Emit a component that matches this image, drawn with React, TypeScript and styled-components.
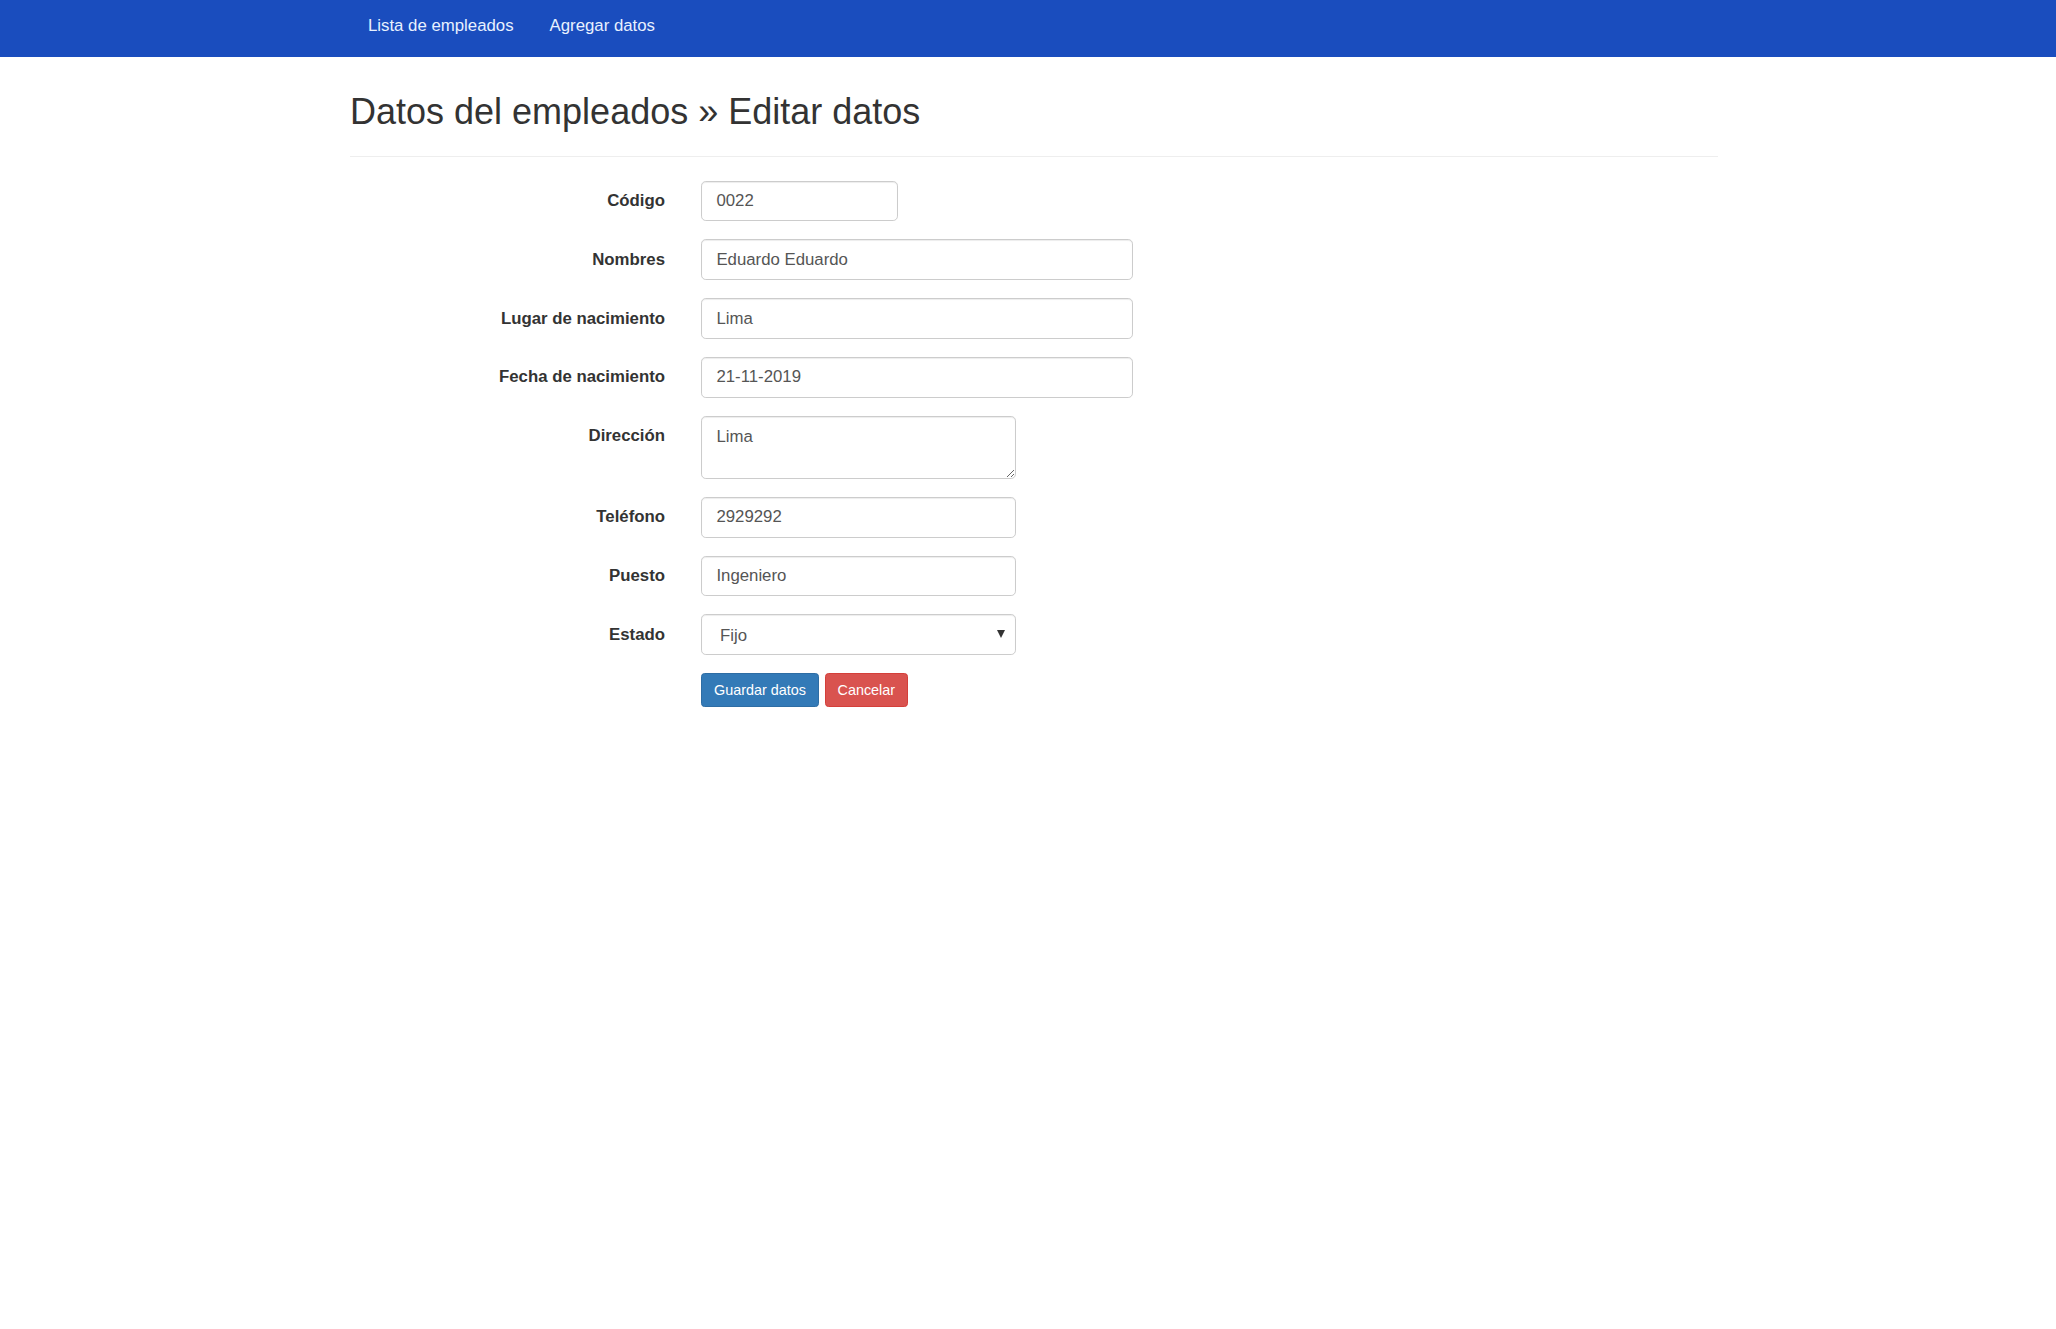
import React from "react";
import styled, { createGlobalStyle } from "styled-components";

const GlobalStyle = createGlobalStyle`
  html, body { margin: 0; padding: 0; background: #fff; }
  body {
    font-family: "Liberation Sans", Arial, Helvetica, sans-serif;
    font-size: 16.8px;
    line-height: 1.42857;
    color: #333;
  }
  * { box-sizing: border-box; }
`;

const Navbar = styled.nav`
  height: 57px;
  background: #1a4dbe;
`;

const Container = styled.div`
  width: 1368px;
  margin-left: calc(50% - 678px);
`;

const NavList = styled.ul`
  display: flex;
  list-style: none;
  margin: 0;
  padding: 0;
`;

const NavLink = styled.a`
  display: block;
  padding: 14px 18px 19px;
  font-size: 16.8px;
  line-height: 24px;
  color: #e8f1ff;
  text-decoration: none;
`;

const Title = styled.h2`
  margin: 35px 0 0;
  font-size: 36px;
  font-weight: 500;
  line-height: 1.1;
  color: #333;
`;

const Divider = styled.hr`
  margin: 24px 0 24px;
  border: 0;
  border-top: 1px solid #eee;
`;

const Form = styled.form`
  display: grid;
  grid-template-columns: 315px 1fr;
  column-gap: 36px;
  row-gap: 18px;
  align-items: start;
`;

const Label = styled.label`
  padding-top: 8.4px;
  text-align: right;
  font-weight: 700;
  font-size: 16.8px;
  line-height: 24px;
  color: #333;
`;

const controlBase = `
  display: block;
  padding: 8.4px 14.4px;
  font-family: "Liberation Sans", Arial, Helvetica, sans-serif;
  font-size: 16.8px;
  line-height: 24px;
  color: #555;
  background: #fff;
  border: 1px solid #ccc;
  border-radius: 4.8px;
  box-shadow: inset 0 1px 1px rgba(0, 0, 0, 0.075);
  outline: none;
`;

const Input = styled.input<{ $w: number }>`
  ${controlBase}
  width: ${(p) => p.$w}px;
  height: 40.8px;
`;

const TextArea = styled.textarea<{ $w: number }>`
  ${controlBase}
  width: ${(p) => p.$w}px;
  height: 63px;
  resize: both;
  margin: 0;
`;

const SelectWrap = styled.div<{ $w: number }>`
  position: relative;
  width: ${(p) => p.$w}px;
  &::after {
    content: "";
    position: absolute;
    right: 11px;
    top: 16px;
    border-left: 4px solid transparent;
    border-right: 4px solid transparent;
    border-top: 8px solid #333;
    pointer-events: none;
  }
`;

const Select = styled.select`
  ${controlBase}
  appearance: none;
  -webkit-appearance: none;
  width: 100%;
  height: 40.8px;
  padding-left: 18px;
`;

const Actions = styled.div`
  grid-column: 2;
  display: flex;
  gap: 5.5px;
`;

const Button = styled.button<{ $variant: "primary" | "danger" }>`
  height: 34px;
  padding: 0 12px;
  font-family: "Liberation Sans", Arial, Helvetica, sans-serif;
  font-size: 14.4px;
  line-height: 21px;
  color: #fff;
  border-radius: 3.6px;
  cursor: pointer;
  background: ${(p) => (p.$variant === "primary" ? "#337ab7" : "#d9534f")};
  border: 1px solid ${(p) => (p.$variant === "primary" ? "#2e6da4" : "#d43f3a")};
`;

const fields: { label: string; value: string; w: number; kind?: "textarea" | "select" }[] = [
  { label: "Código", value: "0022", w: 197 },
  { label: "Nombres", value: "Eduardo Eduardo", w: 432 },
  { label: "Lugar de nacimiento", value: "Lima", w: 432 },
  { label: "Fecha de nacimiento", value: "21-11-2019", w: 432 },
  { label: "Dirección", value: "Lima", w: 315, kind: "textarea" },
  { label: "Teléfono", value: "2929292", w: 315 },
  { label: "Puesto", value: "Ingeniero", w: 315 },
  { label: "Estado", value: "Fijo", w: 315, kind: "select" },
];

export default function App() {
  return (
    <>
      <GlobalStyle />
      <Navbar>
        <Container>
          <NavList>
            <li>
              <NavLink href="#">Lista de empleados</NavLink>
            </li>
            <li>
              <NavLink href="#">Agregar datos</NavLink>
            </li>
          </NavList>
        </Container>
      </Navbar>
      <Container>
        <Title>Datos del empleados » Editar datos</Title>
        <Divider />
        <Form onSubmit={(e) => e.preventDefault()}>
          {fields.map((f) => (
            <React.Fragment key={f.label}>
              <Label>{f.label}</Label>
              {f.kind === "textarea" ? (
                <TextArea $w={f.w} defaultValue={f.value} />
              ) : f.kind === "select" ? (
                <SelectWrap $w={f.w}>
                  <Select defaultValue={f.value}>
                    <option>Fijo</option>
                    <option>Contratado</option>
                    <option>Outsourcing</option>
                  </Select>
                </SelectWrap>
              ) : (
                <Input $w={f.w} defaultValue={f.value} />
              )}
            </React.Fragment>
          ))}
          <Actions>
            <Button $variant="primary" type="submit">Guardar datos</Button>
            <Button $variant="danger" type="button">Cancelar</Button>
          </Actions>
        </Form>
      </Container>
    </>
  );
}
